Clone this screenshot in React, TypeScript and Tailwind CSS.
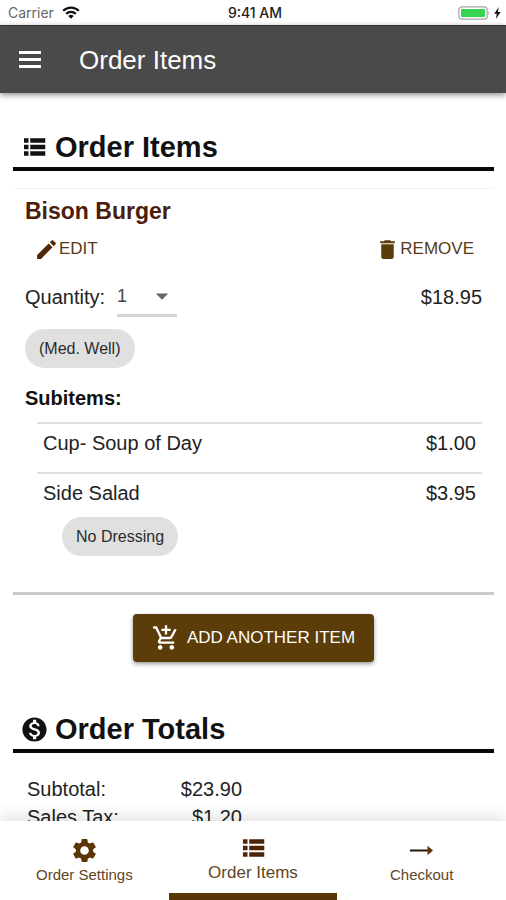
import React, { useState } from "react";
import {
  MdAddShoppingCart,
  MdArrowDropDown,
  MdDelete,
  MdEdit,
  MdMonetizationOn,
  MdSettings,
} from "react-icons/md";

interface Subitem {
  name: string;
  price: number;
  options: string[];
}

const subitems: Subitem[] = [
  { name: "Cup- Soup of Day", price: 1, options: [] },
  { name: "Side Salad", price: 3.95, options: ["No Dressing"] },
];

const totals = [
  { label: "Subtotal:", amount: 23.9 },
  { label: "Sales Tax:", amount: 1.2 },
];

function formatPrice(value: number): string {
  return `$${value.toFixed(2)}`;
}

function MenuIcon({ className }: { className: string }) {
  return (
    <svg viewBox="0 0 30 30" className={className} stroke="currentColor" strokeWidth="3">
      <path d="M4 7.5h22M4 14.5h22M4 21.5h22" />
    </svg>
  );
}

function ListIcon({ className }: { className: string }) {
  return (
    <svg viewBox="0 0 24 24" className={className} fill="currentColor">
      <path d="M4 10.2v3.6h3.6v-3.6zM4 15.4V19h3.6v-3.6zM4 5v3.6h3.6V5zM9 10.2v3.6h12v-3.6zM9 15.4V19h12v-3.6zM9 5v3.6h12V5z" />
    </svg>
  );
}

function StatusBar() {
  return (
    <div className="grid h-[25px] shrink-0 grid-cols-3 items-center bg-white pl-2 pr-1 font-['Inter',sans-serif] text-sm leading-none">
      <div className="flex items-center gap-2 text-[#666]">
        <span>Carrier</span>
        <svg viewBox="0 0 18 13" className="h-[13px] w-[18px]" fill="none" stroke="#111" strokeWidth="2.2">
          <path d="M1.2 4.8a11 11 0 0 1 15.6 0" />
          <path d="M4.2 7.9a6.8 6.8 0 0 1 9.6 0" />
          <path d="M9 12.8 6.3 10.1a3.8 3.8 0 0 1 5.4 0z" fill="#111" stroke="none" />
        </svg>
      </div>
      <span className="text-center font-medium text-[#222]">9:41 AM</span>
      <svg viewBox="0 0 44 14" className="h-[14px] w-[44px] justify-self-end">
        <rect x="0.8" y="0.8" width="28.4" height="12.4" rx="3" fill="#fff" stroke="#a5a5a5" strokeWidth="1.2" />
        <rect x="3" y="3" width="24" height="8" rx="1" fill="#35d552" />
        <path d="M30.5 5v4c1.2-.4 1.2-3.6 0-4z" fill="#a5a5a5" />
        <path d="M40.8 1 36.2 7.8h2.6l-1 5.2 4.8-7h-2.8z" fill="#111" />
      </svg>
    </div>
  );
}

function SectionHeading({ icon, title }: { icon: React.ReactNode; title: string }) {
  return (
    <div className="flex items-center gap-2 border-b-4 border-[#080808] pb-0.5 pl-2 text-[#111]">
      <span className="flex w-[26px] justify-center">{icon}</span>
      <h2 className="text-[29px] font-bold leading-9">{title}</h2>
    </div>
  );
}

function Chip({ label }: { label: string }) {
  return (
    <span className="inline-flex h-[39px] items-center rounded-full bg-[#e0e0e0] px-[14px] text-base text-[#2b2b2b]">
      {label}
    </span>
  );
}

export default function App() {
  const [quantity, setQuantity] = useState("1");

  return (
    <div className="flex h-screen flex-col bg-white font-['Liberation_Sans',Arial,sans-serif] text-xl text-[#222]">
      <StatusBar />

      {/* App bar */}
      <header className="z-10 flex h-[68px] shrink-0 items-center gap-[34px] border-t border-[#333] bg-[#4a4a4a] px-[15px] text-white shadow-[0_2px_6px_rgba(0,0,0,0.45)]">
        <button type="button" aria-label="Menu">
          <MenuIcon className="size-[30px]" />
        </button>
        <h1 className="text-[26px] leading-8">Order Items</h1>
      </header>

      <main className="min-h-0 flex-1 overflow-y-auto pl-[13px] pr-3 pt-9 [scrollbar-width:none]">
        <SectionHeading icon={<ListIcon className="size-[30px] shrink-0" />} title="Order Items" />

        {/* Ordered item */}
        <article className="mt-[17px] border-b-[3px] border-t border-b-[#c9c9c9] border-t-[#f3f3f3] px-3 pb-9 pt-1.5">
          <h3 className="text-[23px] font-bold leading-8 text-[#4c1d0b]">Bison Burger</h3>

          <div className="mt-1.5 flex justify-between px-2 text-[17px] leading-8 text-[#573b18]">
            <button type="button" className="flex items-center pl-px">
              <MdEdit className="size-[25px] text-[#4f2908]" />
              EDIT
            </button>
            <button type="button" className="flex items-center">
              <MdDelete className="size-[25px] text-[#5c3c0a]" />
              REMOVE
            </button>
          </div>

          <div className="mt-3 flex h-[40px] items-center justify-between">
            <div className="flex items-center gap-3">
              <label htmlFor="quantity">Quantity:</label>
              <div className="relative">
                <select
                  id="quantity"
                  value={quantity}
                  onChange={(e) => setQuantity(e.target.value)}
                  className="h-[40px] w-[60px] appearance-none border-b-[3px] border-[#d4d4d4] bg-transparent text-lg text-[#444] outline-none"
                >
                  <option>1</option>
                  <option>2</option>
                  <option>3</option>
                  <option>4</option>
                </select>
                <MdArrowDropDown className="pointer-events-none absolute right-0 top-1 size-[30px] text-[#666]" />
              </div>
            </div>
            <span>{formatPrice(18.95)}</span>
          </div>

          <div className="mt-3 flex">
            <Chip label="(Med. Well)" />
          </div>

          <h4 className="mt-3.5 font-bold leading-8 text-[#111]">Subitems:</h4>

          <ul className="mt-2 pl-3">
            {subitems.map((item) => (
              <li key={item.name} className="min-h-[50px] border-t-2 border-[#e0e0e0] px-[6px] pt-[3px]">
                <div className="flex justify-between leading-8">
                  <span>{item.name}</span>
                  <span>{formatPrice(item.price)}</span>
                </div>
                {item.options.length > 0 && (
                  <div className="mt-2 flex pl-[19px]">
                    {item.options.map((option) => (
                      <Chip key={option} label={option} />
                    ))}
                  </div>
                )}
              </li>
            ))}
          </ul>
        </article>

        <div className="mt-[19px] flex justify-center">
          <button
            type="button"
            className="flex h-[48px] items-center gap-[7px] rounded bg-[#5c3d0a] px-[19px] text-[17px] text-white shadow-[0_2px_4px_rgba(0,0,0,0.4)]"
          >
            <MdAddShoppingCart className="size-[28px]" />
            ADD ANOTHER ITEM
          </button>
        </div>

        {/* Totals */}
        <section className="mt-[49px] pb-6">
          <SectionHeading icon={<MdMonetizationOn className="size-[29px] shrink-0" />} title="Order Totals" />
          <table className="ml-[14px] mt-[22px] w-[215px] leading-7">
            <tbody>
              {totals.map((row) => (
                <tr key={row.label}>
                  <th scope="row" className="text-left font-normal">
                    {row.label}
                  </th>
                  <td className="text-right">{formatPrice(row.amount)}</td>
                </tr>
              ))}
            </tbody>
          </table>
        </section>
      </main>

      {/* Bottom tabs */}
      <nav className="z-10 grid h-[79px] shrink-0 grid-cols-3 bg-white text-[15px] leading-5 text-[#604524] shadow-[0_-4px_16px_rgba(0,0,0,0.12)]">
        <a href="#settings" className="flex flex-col items-center pt-[15px]">
          <MdSettings className="size-[29px] text-[#5c3505]" />
          Order Settings
        </a>
        <a
          href="#items"
          aria-current="page"
          className="flex flex-col items-center border-b-[7px] border-[#5a3508] pt-3 text-[17px]"
        >
          <ListIcon className="size-[30px] text-[#4d2408]" />
          Order Items
        </a>
        <a href="#checkout" className="flex flex-col items-center pt-[15px]">
          <svg viewBox="0 0 29 29" className="size-[29px]">
            <path d="M3 14.5h19" stroke="#2a1608" strokeWidth="2" />
            <path d="M20.5 9.7 26 14.5l-5.5 4.8z" fill="#5c3505" />
          </svg>
          Checkout
        </a>
      </nav>
    </div>
  );
}
